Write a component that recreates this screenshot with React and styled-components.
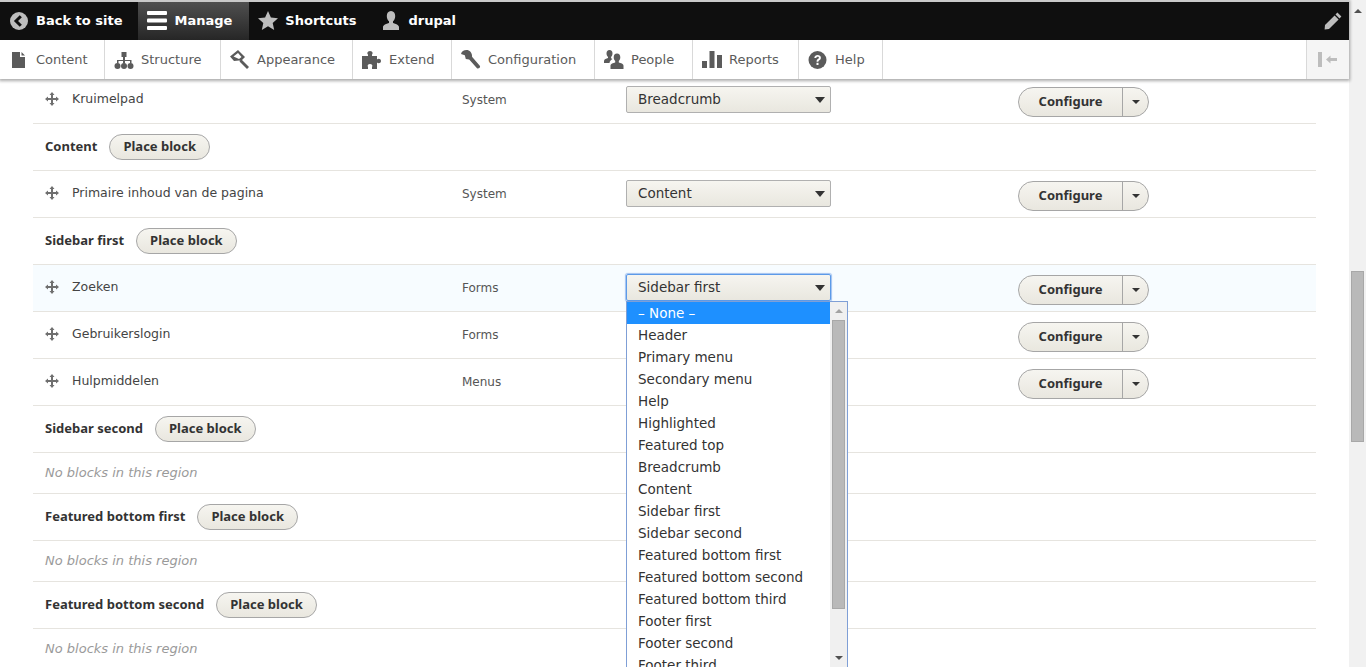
import styled, { createGlobalStyle } from "styled-components";

const GlobalStyle = createGlobalStyle`
  html, body {
    margin: 0;
    height: 100%;
    overflow: hidden;
    background: #fff;
    font-family: "DejaVu Sans", Verdana, sans-serif;
  }
  * { box-sizing: border-box; }
`;

const GREY = "#bdbdbd";
const TRAY = "#5b5b5b";
const BOLD_FONT = `"Noto Sans", "Open Sans", sans-serif`;

const Back = () => (
  <svg width="19" height="18" viewBox="0 0 19 18">
    <circle cx="9" cy="9" r="9" fill={GREY} />
    <path d="M10.800 4.200 6 9l4.800 4.800" fill="none" stroke="#0f0f0f" strokeWidth="3" />
  </svg>
);
const Burger = () => (
  <svg width="20" height="19" viewBox="0 0 20 19">
    <rect width="20" height="4" rx="1" fill="#fff" />
    <rect y="7.500" width="20" height="4" rx="1" fill="#fff" />
    <rect y="15" width="20" height="4" rx="1" fill="#fff" />
  </svg>
);
const Star = () => (
  <svg width="20" height="19" viewBox="0 0 20 19">
    <path d="M10 0l2.900 6.500 7.100.7-5.300 4.700 1.500 7L10 15.300 3.800 19l1.500-7L0 7.200l7.100-.7z" fill={GREY} />
  </svg>
);
const User = () => (
  <svg width="20" height="19" viewBox="0 0 20 19">
    <path d="M10 0c2.800 0 4.200 2.200 4.200 5 0 2.400-1 4.300-2.200 5.300v1.700c2.500.8 6 1.800 6 4.200V19H2v-2.800c0-2.400 3.500-3.400 6-4.200v-1.700C6.800 9.300 5.800 7.400 5.800 5 5.800 2.200 7.200 0 10 0z" fill={GREY} />
  </svg>
);
const Pencil = () => (
  <svg width="18" height="18" viewBox="0 0 18 18">
    <path d="M13.400.6 17.400 4.600 15.500 6.500 11.500 2.500zM10.600 3.400l4 4L5 17 .6 17.400 1 13z" fill={GREY} />
  </svg>
);
const FileIcon = () => (
  <svg width="20" height="18" viewBox="0 0 20 18">
    <path d="M3 1h8v5h5v11H3zM12.500 1 16 4.600h-3.500z" fill={TRAY} />
  </svg>
);
const StructureIcon = () => (
  <svg width="20" height="18" viewBox="0 0 20 18">
    <path d="M7.500 1h5v5h-1.500v3h6.500v3.500h-1.500V10H11v2.500H9V10H4.500v2.500H3V9h6V6H7.500z" fill={TRAY} />
    <circle cx="3.500" cy="15" r="3" fill={TRAY} />
    <circle cx="10" cy="15" r="3" fill={TRAY} />
    <circle cx="16.500" cy="15" r="3" fill={TRAY} />
  </svg>
);
const BrushIcon = () => (
  <svg width="20" height="19" viewBox="0 0 20 19">
    <path d="M8 0l7 7-4 4-2-.5-5 .5-4-4.500z" fill={TRAY} />
    <path d="M3.500 6.500 8 3l3.500 4-2.500 2z" fill="#fff" />
    <path d="M11.500 9.500 19 17l-2 2-7.500-7.500z" fill={TRAY} />
  </svg>
);
const PuzzleIcon = () => (
  <svg width="20" height="18" viewBox="0 0 20 18">
    <path d="M0 5h6V3.500C5 3 5 0 8 0s3 3 2 3.500V5h5v3.500c1-1.200 4-1 4 1.500s-3 2.700-4 1.500V18h-5v-2c1-1.300 0-3-2-3s-3 1.700-2 3v2H0z" fill={TRAY} />
  </svg>
);
const WrenchIcon = () => (
  <svg width="20" height="19" viewBox="0 0 20 19">
    <path d="M5.500 0C2.800 0 .5 1.500 0 4l3.800 1.200L4.800 9l3.400.4 7.800 8.800c1.300 1.400 4-1 2.800-2.400L11 6.800C11.500 3.300 9 0 5.500 0z" fill={TRAY} />
  </svg>
);
const PeopleIcon = () => (
  <svg width="20" height="19" viewBox="0 0 20 19">
    <path d="M5.500 0C7.500 0 8.500 1.500 8.500 3.500c0 1.500-.6 2.800-1.400 3.500v1.300l1.400.6c-1.500 1-3 2-3 4.100H0v-2c0-1.800 2.500-2.500 4-3V7C3.200 6.300 2.500 5 2.500 3.500 2.500 1.500 3.500 0 5.500 0z" fill={TRAY} />
    <path d="M13 3.500c2.200 0 3.300 1.700 3.300 3.800 0 1.600-.7 3-1.500 3.700v1.500c2 .6 4.700 1.300 4.700 3.200V19h-13v-3.300c0-1.900 2.700-2.600 4.700-3.200V11c-.8-.7-1.500-2.100-1.500-3.700 0-2.100 1.100-3.800 3.300-3.800z" fill={TRAY} />
  </svg>
);
const BarsIcon = () => (
  <svg width="20" height="18" viewBox="0 0 20 18">
    <path d="M0 10h5v7H0zM7.500 0h5v17h-5zM15 4h5v13h-5z" fill={TRAY} />
  </svg>
);
const HelpIcon = () => (
  <svg width="20" height="18" viewBox="0 0 20 18">
    <circle cx="9.500" cy="9" r="9" fill={TRAY} />
    <path d="M6.300 7c0-4 6.600-4 6.600-.3 0 2.500-2.500 2.300-2.500 4H8.600c0-3 2.300-2.800 2.300-4 0-1.300-2.600-1.200-2.600.3z" fill="#fff" />
    <rect x="8.500" y="11.800" width="2" height="2.200" fill="#fff" />
  </svg>
);
const Collapse = () => (
  <svg width="20" height="15" viewBox="0 0 20 15">
    <rect width="4" height="15" fill={GREY} />
    <path d="M8 7.500 12.500 3.500V6H19v3h-6.500v2.500z" fill={GREY} />
  </svg>
);
const Drag = () => (
  <svg width="14" height="14" viewBox="0 0 14 14">
    <path d="M7 0l2.500 3H8v3h3V4.500L14 7l-3 2.500V8H8v3h1.500L7 14l-2.500-3H6V8H3v1.500L0 7l3-2.500V6h3V3H4.500z" fill="#6f6f6f" />
  </svg>
);

const TABS = [
  { label: "Content", width: 105, icon: <FileIcon /> },
  { label: "Structure", width: 116, icon: <StructureIcon /> },
  { label: "Appearance", width: 132, icon: <BrushIcon /> },
  { label: "Extend", width: 99, icon: <PuzzleIcon /> },
  { label: "Configuration", width: 143, icon: <WrenchIcon /> },
  { label: "People", width: 98, icon: <PeopleIcon /> },
  { label: "Reports", width: 106, icon: <BarsIcon /> },
  { label: "Help", width: 84, icon: <HelpIcon /> },
];

const REGIONS = [
  "– None –", "Header", "Primary menu", "Secondary menu", "Help", "Highlighted",
  "Featured top", "Breadcrumb", "Content", "Sidebar first", "Sidebar second",
  "Featured bottom first", "Featured bottom second", "Featured bottom third",
  "Footer first", "Footer second", "Footer third",
];

function BlockRow({ title, category, region, active, open }) {
  return (
    <Row $active={active}>
      <BlockTitle><Drag /><span>{title}</span></BlockTitle>
      <Category>{category}</Category>
      <SelectWrap>
        <Select $focus={open}>
          {region}
          <Caret />
        </Select>
        {open && (
          <Dropdown>
            <OptionList>
              {REGIONS.map((r, i) => (
                <Option key={r} $selected={i === 0}>{r}</Option>
              ))}
            </OptionList>
            <ListScroll>
              <ArrowUp />
              <ListThumb />
              <ArrowDown />
            </ListScroll>
          </Dropdown>
        )}
      </SelectWrap>
      <SplitButton>
        <ConfigureBtn>Configure</ConfigureBtn>
        <ToggleBtn><SmallCaret /></ToggleBtn>
      </SplitButton>
    </Row>
  );
}

function RegionRow({ name }) {
  return (
    <RegionHead>
      <RegionName>{name}</RegionName>
      <PlaceBtn>Place block</PlaceBtn>
    </RegionHead>
  );
}

export default function App() {
  return (
    <Shell>
      <GlobalStyle />
      <Main>
        <Toolbar>
          <TopBar>
            <TopItem $pad="0 16px 1px 10px"><Back /><span>Back to site</span></TopItem>
            <TopItem $active $pad="0 17px 1px 9px"><Burger /><span>Manage</span></TopItem>
            <TopItem $pad="0 25px 1px 9px"><Star /><span>Shortcuts</span></TopItem>
            <TopItem $pad="0 0 1px 0"><User /><span>drupal</span></TopItem>
            <PencilBtn><Pencil /></PencilBtn>
          </TopBar>
          <Tray>
            {TABS.map((t) => (
              <Tab key={t.label} $width={t.width}>{t.icon}<span>{t.label}</span></Tab>
            ))}
            <CollapseBtn><Collapse /></CollapseBtn>
          </Tray>
        </Toolbar>
        <Content>
          <BlockRow title="Kruimelpad" category="System" region="Breadcrumb" />
          <RegionRow name="Content" />
          <BlockRow title="Primaire inhoud van de pagina" category="System" region="Content" />
          <RegionRow name="Sidebar first" />
          <BlockRow title="Zoeken" category="Forms" region="Sidebar first" active open />
          <BlockRow title="Gebruikerslogin" category="Forms" region="Sidebar first" />
          <BlockRow title="Hulpmiddelen" category="Menus" region="Sidebar first" />
          <RegionRow name="Sidebar second" />
          <EmptyRow>No blocks in this region</EmptyRow>
          <RegionRow name="Featured bottom first" />
          <EmptyRow>No blocks in this region</EmptyRow>
          <RegionRow name="Featured bottom second" />
          <EmptyRow>No blocks in this region</EmptyRow>
        </Content>
      </Main>
      <PageScroll>
        <PageArrow />
        <PageThumb />
      </PageScroll>
    </Shell>
  );
}

const Shell = styled.div`
  display: flex;
  height: 667px;
  overflow: hidden;
`;

const Main = styled.div`
  width: 1349px;
  display: flex;
  flex-direction: column;
`;

const Toolbar = styled.header`
  position: relative;
  z-index: 2;
  flex: none;
  height: 79px;
  box-shadow: 0 1px 3px 1px rgba(0, 0, 0, 0.33);
`;

const TopBar = styled.div`
  display: flex;
  height: 40px;
  background: #0f0f0f;
  border-top: 2px solid #c9c9c9;
  color: #fff;
  font-size: 13px;
  font-weight: bold;
`;

const TopItem = styled.div`
  display: flex;
  align-items: center;
  gap: 7px;
  padding: ${(props) => props.$pad};
  background: ${(props) =>
    props.$active ? "linear-gradient(#4f4f4f, #262626)" : "none"};
`;

const PencilBtn = styled.div`
  margin-left: auto;
  display: flex;
  align-items: center;
  padding-right: 7px;
`;

const Tray = styled.nav`
  display: flex;
  height: 39px;
  background: #fff;
  color: ${TRAY};
  font-size: 13px;
`;

const Tab = styled.div`
  display: flex;
  flex: none;
  align-items: center;
  gap: 7px;
  width: ${(props) => props.$width}px;
  padding-left: 9px;
  border-right: 1px solid #d9d9d9;
`;

const CollapseBtn = styled.div`
  margin-left: auto;
  width: 43px;
  display: flex;
  align-items: center;
  justify-content: center;
  background: #f5f5f5;
  border-left: 1px solid #d9d9d9;
`;

const Content = styled.main`
  margin: -2px 33px 0;
  width: 1283px;
  color: #333;
  font-size: 13px;
`;

const Row = styled.div`
  position: relative;
  display: grid;
  grid-template-columns: 429px 164px 392px 1fr;
  align-items: center;
  height: 47px;
  border-bottom: 1px solid #e6e4df;
  background: ${(props) => (props.$active ? "#f7fcff" : "#fff")};
`;

const BlockTitle = styled.div`
  display: flex;
  align-items: center;
  gap: 13px;
  padding-left: 12px;
  margin-top: -3px;
  font-size: 12.5px;
  color: #444;
`;

const Category = styled.div`
  color: #555;
  font-size: 12px;
`;

const SelectWrap = styled.div`
  position: relative;
  width: 205px;
  margin-top: -1px;
`;

const Select = styled.div`
  position: relative;
  height: 27px;
  padding: 0 24px 2px 11px;
  display: flex;
  align-items: center;
  font-size: 13.5px;
  color: #333;
  border: 1px solid ${(props) => (props.$focus ? "#5c9ae8" : "#b0b0b0")};
  border-radius: 2px;
  background: linear-gradient(#f6f5f0, #e9e7df);
  box-shadow: ${(props) => (props.$focus ? "0 0 1px 1px #9fc0f0" : "none")};
`;

const Caret = styled.i`
  position: absolute;
  right: 5px;
  top: 10px;
  border: 5px solid transparent;
  border-top: 6px solid #333;
  border-bottom: 0;
`;

const Dropdown = styled.div`
  position: absolute;
  z-index: 3;
  top: 100%;
  left: 0;
  width: 222px;
  height: 380px;
  display: flex;
  background: #fff;
  border: 1px solid #7f9fd6;
  overflow: hidden;
`;

const OptionList = styled.div`
  flex: 1;
`;

const Option = styled.div`
  height: 22px;
  line-height: 22px;
  padding-left: 11px;
  font-size: 13.5px;
  white-space: nowrap;
  color: ${(props) => (props.$selected ? "#fff" : "#333")};
  background: ${(props) => (props.$selected ? "#1e90ff" : "transparent")};
`;

const ListScroll = styled.div`
  width: 17px;
  height: 365px;
  flex: none;
  display: flex;
  flex-direction: column;
  align-items: center;
  background: #f0f0f0;
`;

const ArrowUp = styled.i`
  margin: 7px 0 7px;
  border: 4px solid transparent;
  border-bottom: 4px solid #a3a3a3;
  border-top: 0;
`;

const ArrowDown = styled.i`
  margin-top: auto;
  margin-bottom: 7px;
  border: 4px solid transparent;
  border-top: 4px solid #505050;
  border-bottom: 0;
`;

const ListThumb = styled.div`
  width: 13px;
  height: 289px;
  background: #b9b9b9;
  border: 1px solid #a8a8a8;
`;

const SplitButton = styled.div`
  display: flex;
  width: 131px;
  height: 30px;
  margin-top: 3px;
  border: 1px solid #a6a6a6;
  border-radius: 15px;
  background: linear-gradient(#f6f5f0, #e9e7df);
  color: #333;
  font-family: ${BOLD_FONT};
  font-weight: bold;
`;

const ConfigureBtn = styled.div`
  width: 104px;
  display: flex;
  align-items: center;
  justify-content: center;
  padding-bottom: 2px;
  border-right: 1px solid #a6a6a6;
`;

const ToggleBtn = styled.div`
  flex: 1;
  display: flex;
  align-items: center;
  justify-content: center;
`;

const SmallCaret = styled.i`
  border: 4px solid transparent;
  border-top: 4px solid #333;
  border-bottom: 0;
`;

const RegionHead = styled.div`
  display: flex;
  align-items: center;
  gap: 12px;
  height: 47px;
  padding-left: 12px;
  border-bottom: 1px solid #e6e4df;
`;

const RegionName = styled.div`
  font-family: ${BOLD_FONT};
  font-weight: bold;
  color: #333;
  margin-top: -2px;
`;

const PlaceBtn = styled.div`
  height: 26px;
  padding: 0 13px 2px;
  display: flex;
  align-items: center;
  border: 1px solid #a6a6a6;
  border-radius: 13px;
  background: linear-gradient(#f6f5f0, #e9e7df);
  font-family: ${BOLD_FONT};
  font-weight: bold;
  color: #333;
`;

const EmptyRow = styled.div`
  display: flex;
  align-items: center;
  height: 41px;
  padding: 0 0 2px 12px;
  border-bottom: 1px solid #e6e4df;
  font-style: italic;
  color: #9a9a9a;
`;

const PageScroll = styled.div`
  width: 17px;
  flex: none;
  display: flex;
  flex-direction: column;
  align-items: center;
  background: #f1f1f1;
`;

const PageArrow = styled.i`
  margin: 9px 0 258px;
  border: 4px solid transparent;
  border-bottom: 4px solid #505050;
  border-top: 0;
`;

const PageThumb = styled.div`
  width: 13px;
  height: 171px;
  background: #b9b9b9;
  border: 1px solid #a8a8a8;
`;
